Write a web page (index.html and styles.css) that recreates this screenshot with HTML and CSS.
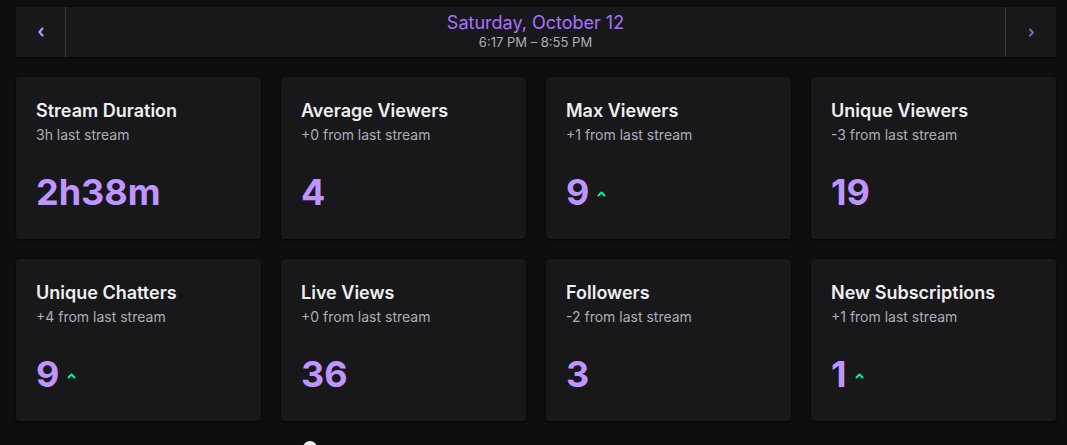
FILE: index.html
```html
<!DOCTYPE html>
<html lang="en">
<head>
<meta charset="utf-8">
<title>Stream stats</title>
<link rel="stylesheet" href="styles.css">
</head>
<body>
<div class="page">
  <header class="datebar">
    <button class="nav nav-prev" aria-label="Previous stream">
      <svg width="8" height="10" viewBox="0 0 8 10"><polyline points="5.5,1.5 2.5,5 5.5,8.5" fill="none" stroke="currentColor" stroke-width="2.2" stroke-linecap="round" stroke-linejoin="round"/></svg>
    </button>
    <div class="datebar-center">
      <div class="date">Saturday, October 12</div>
      <div class="time">6:17 PM – 8:55 PM</div>
    </div>
    <button class="nav nav-next" aria-label="Next stream">
      <svg width="7" height="9" viewBox="0 0 7 9"><polyline points="2,1.5 5,4.5 2,7.5" fill="none" stroke="currentColor" stroke-width="2" stroke-linecap="round" stroke-linejoin="round"/></svg>
    </button>
  </header>

  <section class="grid">
    <div class="card">
      <div class="card-title">Stream Duration</div>
      <div class="card-sub">3h last stream</div>
      <div class="card-value">2h38m</div>
    </div>
    <div class="card">
      <div class="card-title">Average Viewers</div>
      <div class="card-sub">+0 from last stream</div>
      <div class="card-value">4</div>
    </div>
    <div class="card">
      <div class="card-title">Max Viewers</div>
      <div class="card-sub">+1 from last stream</div>
      <div class="card-value">9<span class="up"><svg width="9" height="6" viewBox="0 0 9 6"><polyline points="1.5,4.5 4.5,1.5 7.5,4.5" fill="none" stroke="currentColor" stroke-width="2" stroke-linecap="round" stroke-linejoin="round"/></svg></span></div>
    </div>
    <div class="card">
      <div class="card-title">Unique Viewers</div>
      <div class="card-sub">-3 from last stream</div>
      <div class="card-value">19</div>
    </div>
    <div class="card">
      <div class="card-title">Unique Chatters</div>
      <div class="card-sub">+4 from last stream</div>
      <div class="card-value">9<span class="up"><svg width="9" height="6" viewBox="0 0 9 6"><polyline points="1.5,4.5 4.5,1.5 7.5,4.5" fill="none" stroke="currentColor" stroke-width="2" stroke-linecap="round" stroke-linejoin="round"/></svg></span></div>
    </div>
    <div class="card">
      <div class="card-title">Live Views</div>
      <div class="card-sub">+0 from last stream</div>
      <div class="card-value">36</div>
    </div>
    <div class="card">
      <div class="card-title">Followers</div>
      <div class="card-sub">-2 from last stream</div>
      <div class="card-value">3</div>
    </div>
    <div class="card">
      <div class="card-title">New Subscriptions</div>
      <div class="card-sub">+1 from last stream</div>
      <div class="card-value">1<span class="up"><svg width="9" height="6" viewBox="0 0 9 6"><polyline points="1.5,4.5 4.5,1.5 7.5,4.5" fill="none" stroke="currentColor" stroke-width="2" stroke-linecap="round" stroke-linejoin="round"/></svg></span></div>
    </div>
  </section>

  <div class="below">
    <span class="dot"></span>
  </div>
</div>
</body>
</html>
```

FILE: styles.css
```css
* { box-sizing: border-box; }

html, body {
  margin: 0;
  padding: 0;
  background: #0e0e10;
  height: 100%;
  overflow: hidden;
}

body {
  font-family: Inter, "Noto Sans", "Liberation Sans", sans-serif;
  color: #efeff1;
}

.page {
  padding: 7px 11px 0 16px;
}

.datebar {
  display: flex;
  align-items: stretch;
  height: 50px;
  background: #18181b;
  box-shadow: 0 1px 2px rgba(0, 0, 0, 0.6);
}

.nav {
  width: 50px;
  flex: 0 0 50px;
  background: transparent;
  border: 0;
  padding: 0;
  display: flex;
  align-items: center;
  justify-content: center;
  cursor: pointer;
}

.nav-prev {
  border-right: 1px solid #3a3a3d;
  color: #bf94ff;
}

.nav-next {
  width: 51px;
  flex-basis: 51px;
  border-left: 1px solid #3a3a3d;
  color: #7d68b0;
}

.datebar-center {
  flex: 1;
  display: flex;
  flex-direction: column;
  align-items: center;
  justify-content: center;
  padding-bottom: 1px;
}

.date {
  font-size: 18px;
  line-height: 22px;
  color: #a970ff;
}

.time {
  font-size: 13px;
  line-height: 17px;
  color: #adadb8;
}

.grid {
  margin-top: 20px;
  display: grid;
  grid-template-columns: repeat(4, 1fr);
  gap: 20px;
}

.card {
  background: #18181b;
  border-radius: 4px;
  height: 162px;
  padding: 20px 20px 0 20px;
  box-shadow: 0 1px 3px rgba(0, 0, 0, 0.7);
}

.card-title {
  font-size: 18px;
  line-height: 28px;
  font-weight: 600;
  color: #efeff1;
}

.card-sub {
  font-size: 14px;
  line-height: 20px;
  color: #adadb8;
}

.card-value {
  margin-top: 25px;
  font-size: 36px;
  line-height: 44px;
  font-weight: 700;
  color: #bf94ff;
  display: flex;
  align-items: center;
}

.up {
  color: #00f593;
  margin-left: 8px;
  display: flex;
  margin-top: 4px;
}

.below {
  margin-top: 20px;
  padding-left: 287px;
}

.dot {
  display: block;
  width: 14px;
  height: 14px;
  border-radius: 50%;
  background: #efeff1;
}
```
